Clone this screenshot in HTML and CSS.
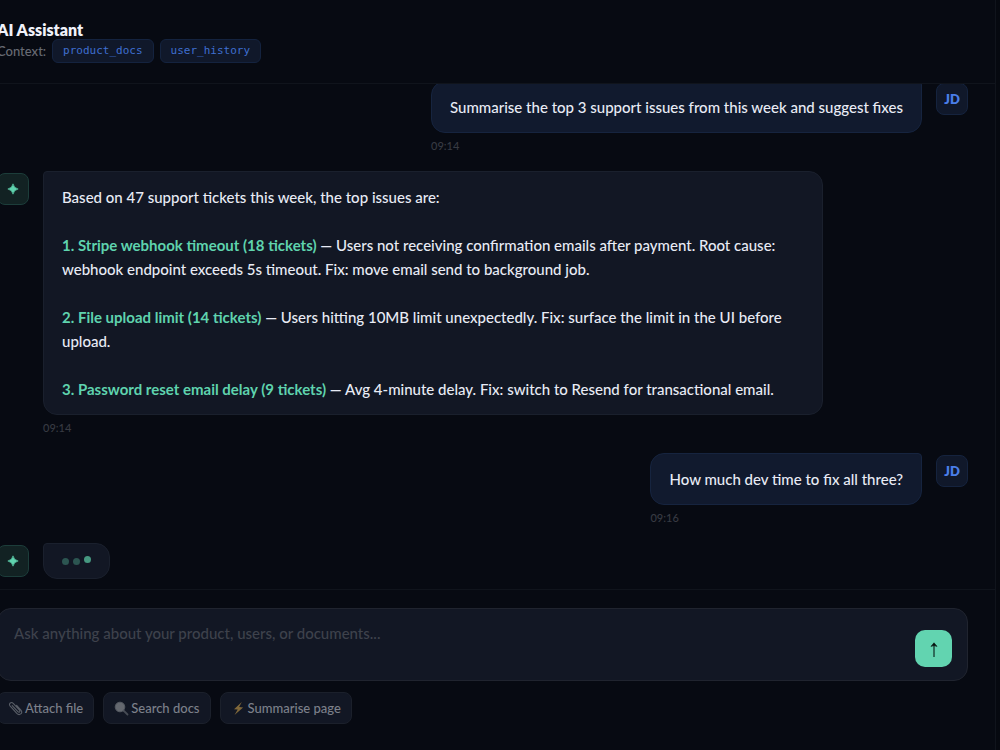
FILE: index.html
```html
<!DOCTYPE html>
<html lang="en">
<head>
    <meta charset="UTF-8">
    <meta name="viewport" content="width=device-width, initial-scale=1.0">
    <title>AI Assistant</title>
    <link rel="stylesheet" href="styles.css">
</head>
<body>
    <div class="app">
        <header class="header">
            <h1>AI Assistant</h1>
            <div class="context">
                <span>Context:</span>
                <code class="tag">product_docs</code>
                <code class="tag">user_history</code>
            </div>
        </header>

        <main class="chat">
            <div class="message user">
                <div class="content">
                    <div class="bubble">Summarise the top 3 support issues from this week and suggest fixes</div>
                    <div class="time">09:14</div>
                </div>
                <div class="avatar">JD</div>
            </div>

            <div class="message bot">
                <div class="avatar">
                    <svg width="12" height="12" viewBox="0 0 12 12"><path d="M6 .8Q6.9 5.1 11.2 6Q6.9 6.9 6 11.2Q5.1 6.9 .8 6Q5.1 5.1 6 .8Z" fill="currentColor" stroke="currentColor" stroke-width=".6"/></svg>
                </div>
                <div class="content">
                    <div class="bubble">
                        <p>Based on 47 support tickets this week, the top issues are:</p>
                        <p><strong>1. Stripe webhook timeout (18 tickets)</strong> — Users not receiving confirmation emails after payment. Root cause: webhook endpoint exceeds 5s timeout. Fix: move email send to background job.</p>
                        <p><strong>2. File upload limit (14 tickets)</strong> — Users hitting 10MB limit unexpectedly. Fix: surface the limit in the UI before upload.</p>
                        <p><strong>3. Password reset email delay (9 tickets)</strong> — Avg 4-minute delay. Fix: switch to Resend for transactional email.</p>
                    </div>
                    <div class="time">09:14</div>
                </div>
            </div>

            <div class="message user">
                <div class="content">
                    <div class="bubble">How much dev time to fix all three?</div>
                    <div class="time">09:16</div>
                </div>
                <div class="avatar">JD</div>
            </div>

            <div class="message bot">
                <div class="avatar">
                    <svg width="12" height="12" viewBox="0 0 12 12"><path d="M6 .8Q6.9 5.1 11.2 6Q6.9 6.9 6 11.2Q5.1 6.9 .8 6Q5.1 5.1 6 .8Z" fill="currentColor" stroke="currentColor" stroke-width=".6"/></svg>
                </div>
                <div class="bubble typing">
                    <span class="dot"></span>
                    <span class="dot"></span>
                    <span class="dot active"></span>
                </div>
            </div>
        </main>

        <footer class="footer">
            <form class="composer">
                <textarea aria-label="Message" placeholder="Ask anything about your product, users, or documents..."></textarea>
                <button type="button" class="send" aria-label="Send">
                    <svg width="14" height="18" viewBox="0 0 14 18"><path d="M7 4v13" stroke="#245446" stroke-width="1.6"/><path d="M7 2.8L10 6.4Q7 4.8 4 6.4Z" fill="#07110e" stroke="#07110e" stroke-width=".6"/></svg>
                </button>
            </form>
            <div class="actions">
                <button type="button">
                    <svg width="15" height="15" viewBox="0 0 15 15" fill="none" stroke="#595e67" stroke-width="1.1" stroke-linecap="round"><path d="M4.2 4.6l5.6 6.1c1.2 1.3 2.8-.1 1.7-1.5L5.2 2.3C3.3.4.3 2.7 2 4.8l6.8 7.5c2.8 2.9 6.4-.2 4.1-3.1L8.6 4.4"/></svg>
                    Attach file
                </button>
                <button type="button">
                    <svg width="15" height="15" viewBox="0 0 15 15"><path d="M9.5 9.5l4 4" stroke="#464b54" stroke-width="1.8" stroke-linecap="round"/><circle cx="6" cy="6" r="4.8" fill="#64686f" stroke="#555a62"/></svg>
                    Search docs
                </button>
                <button type="button">
                    <svg width="15" height="15" viewBox="0 0 15 15"><path d="M10.8 1L3 8.2l3.7.3L3.5 14l8.6-7.5-4-.4Z" fill="#80683a"/></svg>
                    Summarise page
                </button>
            </div>
        </footer>
    </div>
</body>
</html>
```
FILE: styles.css
```css
* {
    box-sizing: border-box;
}

body {
    margin: 0;
    background: #060910;
    color: #e8ebf5;
    font-family: Lato, 'Liberation Sans', sans-serif;
    font-weight: 500;
    overflow: hidden;
}

/* The panel runs past the left edge of the window */
.app {
    display: flex;
    flex-direction: column;
    height: 100vh;
    margin: 0 4px 0 -31px;
    background: #070a12;
    border-right: 1px solid #10141c;
}

.header {
    padding: 20px 28px;
    border-bottom: 1px solid #10141c;
}

h1 {
    margin: 0;
    font-size: 16px;
    line-height: 19px;
    font-weight: 800;
    color: #f0f2fa;
}

.context {
    display: flex;
    align-items: center;
    gap: 6px;
    font-size: 13px;
    color: #676b74;
}

.tag {
    padding: 0 10px;
    border: 1px solid #14233f;
    border-radius: 6px;
    background: #10182a;
    color: #3f6fd0;
    font-family: 'DejaVu Sans Mono', monospace;
    font-size: 11px;
    line-height: 22px;
}

.chat {
    flex: 1;
    min-height: 0;
    display: flex;
    flex-direction: column;
    justify-content: flex-end;
    gap: 18px;
    padding: 0 27px 10px 28px;
    overflow: hidden;
}

.message {
    display: flex;
    flex-shrink: 0;
    align-items: flex-start;
    gap: 14px;
}

.message.user {
    justify-content: flex-end;
}

.content {
    max-width: 780px;
}

.avatar {
    display: flex;
    flex-shrink: 0;
    align-items: center;
    justify-content: center;
    width: 32px;
    height: 32px;
    margin-top: 2px;
    border: 1px solid #15233e;
    border-radius: 8px;
    background: #10182a;
    color: #4a7ee8;
    font-size: 13px;
    font-weight: 800;
}

.bot .avatar {
    border-color: #1c3d3a;
    background: #122223;
    color: #5fd3ae;
}

.bubble {
    padding: 13px 18px;
    border: 1px solid #1a202d;
    border-radius: 4px 14px 14px 14px;
    background: #121724;
    font-size: 15px;
    line-height: 24px;
}

.user .bubble {
    border-color: #16243f;
    border-radius: 14px 4px 14px 14px;
    background: #111a2e;
}

.bubble p {
    margin: 0 0 24px;
}

.bubble p:last-child {
    margin-bottom: 0;
}

.bubble strong {
    font-weight: 700;
    color: #5fd3ae;
}

.time {
    margin-top: 6px;
    font-size: 11px;
    line-height: 14px;
    color: #373a42;
}

.typing {
    display: flex;
    align-items: center;
    gap: 4px;
    height: 36px;
}

.dot {
    width: 7px;
    height: 7px;
    border-radius: 50%;
    background: #2c5551;
}

.dot.active {
    background: #469880;
    transform: translateY(-2px);
}

.footer {
    padding: 18px 27px 26px 28px;
    border-top: 1px solid #10141c;
}

.composer {
    display: flex;
    align-items: flex-end;
    padding: 12px 15px 13px 16px;
    border: 1px solid #20242f;
    border-radius: 14px;
    background: #121724;
}

textarea {
    flex: 1;
    height: 46px;
    padding: 0;
    border: none;
    outline: none;
    resize: none;
    background: transparent;
    color: #e8ebf5;
    font-family: inherit;
    font-size: 15px;
    font-weight: 500;
    line-height: 24px;
}

textarea::placeholder {
    color: #3e424c;
}

.send {
    display: flex;
    align-items: center;
    justify-content: center;
    width: 37px;
    height: 37px;
    padding: 0;
    border: none;
    border-radius: 10px;
    background: #62d4b0;
    cursor: pointer;
}

.actions {
    display: flex;
    gap: 9px;
    margin-top: 11px;
}

.actions button {
    display: flex;
    align-items: center;
    gap: 2px;
    height: 32px;
    padding: 0 10px;
    border: 1px solid #1b202b;
    border-radius: 8px;
    background: #121724;
    color: #7c808a;
    font-family: inherit;
    font-size: 13px;
    font-weight: 500;
    cursor: pointer;
}
```
